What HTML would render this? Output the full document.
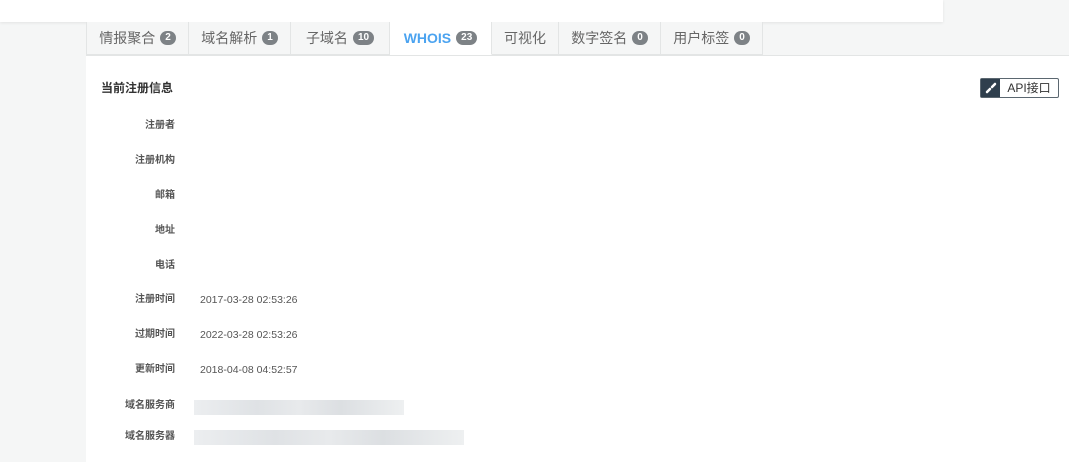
<!DOCTYPE html>
<html><head><meta charset="utf-8"><style>
body{margin:0;width:1069px;height:462px;background:#f5f6f6;font-family:"Liberation Sans","Noto Sans CJK SC",sans-serif;position:relative;overflow:hidden}
.top{position:absolute;left:0;top:0;width:943px;height:22px;background:#fff;box-shadow:0 1px 3px rgba(0,0,0,.08)}
.tabs{position:absolute;left:86px;top:22px;height:33px;display:flex}
.tab{height:32px;border-right:1px solid #e3e5e5;border-bottom:1px solid #e3e5e5;display:flex;align-items:center;justify-content:center;font-size:14px;color:#666;background:#f5f6f6}
.tab:first-child{border-left:1px solid #e3e5e5}
.tab b{display:inline-block;background:#7d8286;color:#fff;font-size:10px;border-radius:7px;padding:1px 5px;margin-left:5px;line-height:12px}
.tab.act{background:#fff;border-bottom-color:#fff;color:#4ba3f0;font-weight:bold}
.panel{position:absolute;left:86px;top:55px;right:0;bottom:0;background:#fff;border-top:1px solid #e3e5e5}
.title{position:absolute;left:101px;top:80px;font-size:12px;font-weight:bold;color:#333;line-height:16px}
.lab{position:absolute;right:894px;font-size:10px;color:#555;font-weight:bold;line-height:12px}
.val{position:absolute;left:200px;font-size:10.5px;color:#555;line-height:12px}
.api{position:absolute;left:980px;top:78px;width:77px;height:18px;border:1px solid #5b6770;border-radius:2px;display:flex;background:#fff}
.api .ic{width:19px;background:#2f3f4d;display:flex;align-items:center;justify-content:center}
.api span{flex:1;text-align:center;font-size:12px;color:#333;line-height:18px}
.blur{position:absolute;left:194px;height:15px;background:linear-gradient(90deg,#eceef0,#dfe2e5 30%,#e8eaec 50%,#dcdfe2 70%,#eef0f1)}
</style></head><body>
<div class="top"></div>
<div class="panel"></div>
<div class="tabs">
<div class="tab" style="width:101px">情报聚合<b>2</b></div>
<div class="tab" style="width:101px">域名解析<b>1</b></div>
<div class="tab" style="width:98px">子域名 <b>10</b></div>
<div class="tab act" style="width:101px">WHOIS<b>23</b></div>
<div class="tab" style="width:66px">可视化</div>
<div class="tab" style="width:101px">数字签名<b>0</b></div>
<div class="tab" style="width:101px">用户标签<b>0</b></div>
</div>
<div class="title">当前注册信息</div>
<div class="api"><div class="ic"><svg width="12" height="12" viewBox="0 0 12 12"><path d="M2 10 L5 7 M7 5 L10 2" stroke="#fff" stroke-width="2.5" stroke-linecap="round"/></svg></div><span>API接口</span></div>
<div class="lab" style="top:120px">注册者</div>
<div class="lab" style="top:155px">注册机构</div>
<div class="lab" style="top:190px">邮箱</div>
<div class="lab" style="top:225px">地址</div>
<div class="lab" style="top:260px">电话</div>
<div class="lab" style="top:294px">注册时间</div><div class="val" style="top:294px">2017-03-28 02:53:26</div>
<div class="lab" style="top:329px">过期时间</div><div class="val" style="top:329px">2022-03-28 02:53:26</div>
<div class="lab" style="top:364px">更新时间</div><div class="val" style="top:364px">2018-04-08 04:52:57</div>
<div class="lab" style="top:400px">域名服务商</div><div class="blur" style="top:400px;width:210px"></div>
<div class="lab" style="top:431px">域名服务器</div><div class="blur" style="top:430px;width:270px"></div>
</body></html>
